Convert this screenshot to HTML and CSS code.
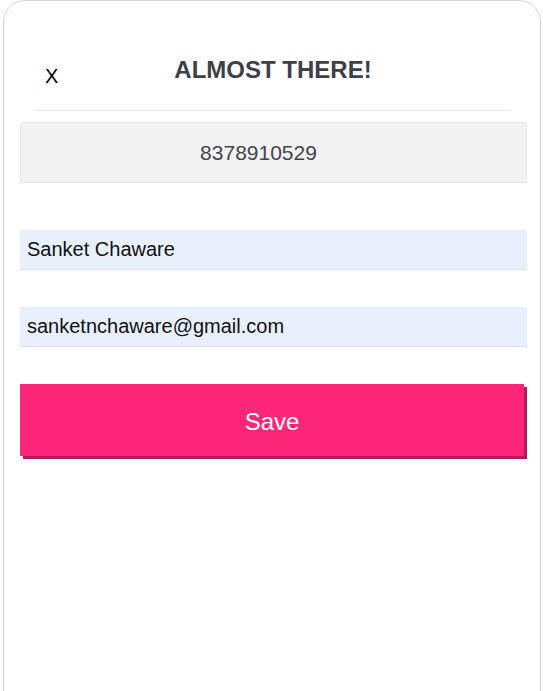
FILE: index.html
```html
<!DOCTYPE html>
<html lang="en">
<head>
<meta charset="utf-8">
<title>Almost there</title>
<link rel="stylesheet" href="styles.css">
</head>
<body>
<div class="card">
  <div class="header">
    <span class="close">X</span>
    <h1 class="title">ALMOST THERE!</h1>
    <span class="spacer"></span>
  </div>
  <div class="form">
    <div class="phone">8378910529</div>
    <div class="field">Sanket Chaware</div>
    <div class="field field-gap">sanketnchaware@gmail.com</div>
    <button class="save">Save</button>
  </div>
</div>
</body>
</html>
```
FILE: styles.css
```css
html, body {
  margin: 0;
  padding: 0;
  background: #ffffff;
  overflow: hidden;
}
body {
  font-family: "Liberation Sans", Arial, sans-serif;
}
.card {
  box-sizing: border-box;
  margin-left: 3px;
  width: 538px;
  min-height: 740px;
  border: 1px solid #d4d4d4;
  border-radius: 22px 22px 0 0;
  background: #fff;
}
.header {
  display: flex;
  align-items: flex-start;
  margin: 0 29px 0 31px;
  padding: 55px 0 22px;
  border-bottom: 1px solid #e8e8e8;
}
.close {
  width: 60px;
  padding-left: 10px;
  box-sizing: border-box;
  margin-top: 8px;
  font-size: 20px;
  line-height: 24px;
  color: #000;
}
.spacer {
  width: 60px;
}
.title {
  flex: 1;
  margin: 0;
  text-align: center;
  font-size: 24px;
  line-height: 28px;
  font-weight: bold;
  color: #3f3f4a;
}
.form {
  display: flex;
  flex-direction: column;
  padding-left: 16px;
  width: 507px;
}
.phone {
  margin-top: 11px;
  height: 61px;
  box-sizing: border-box;
  display: flex;
  align-items: center;
  justify-content: center;
  padding-right: 30px;
  background: #f2f2f2;
  border: 1px solid #e4e4e4;
  border-radius: 3px;
  font-size: 21px;
  color: #444448;
}
.field {
  margin-top: 47px;
  height: 40px;
  box-sizing: border-box;
  display: flex;
  align-items: center;
  padding: 0 7px 1px;
  background: #e8f0fe;
  border-bottom: 1px solid #dcdfe6;
  font-size: 20px;
  color: #111;
}
.field-gap {
  margin-top: 37px;
}
.save {
  margin-top: 37px;
  width: 504px;
  height: 72px;
  border: none;
  padding: 4px 0 0;
  background: #fe2679;
  box-shadow: 3px 3px 0 #b21a58;
  color: #fff;
  font-family: "Liberation Sans", Arial, sans-serif;
  font-size: 24px;
  cursor: pointer;
}
```
